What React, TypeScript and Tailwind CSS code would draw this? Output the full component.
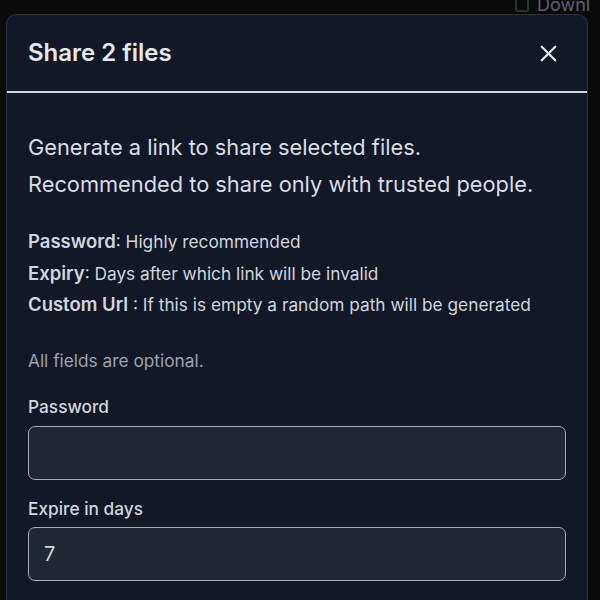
import React from 'react';
import { X } from 'lucide-react';

export default function App() {
  return (
    <div className="w-[600px] h-[600px] overflow-hidden bg-[#0a0a0b] relative font-['Inter',sans-serif]">
      <div className="absolute left-[515px] -top-[9px] flex items-center gap-2 text-[#5b6170] text-[18px] whitespace-nowrap">
        <span className="w-[14px] h-[14px] rounded-[3px] border-2 border-[#1f3a26]" />
        <span>Downl</span>
      </div>
      <div className="pt-[14px] pl-[6px]">
        <div className="w-[582px] h-[620px] rounded-t-[10px] border border-[#2a3140] bg-[#121826] text-[#e5e7eb]">
          <div className="h-[78px] flex items-center justify-between pl-[21px] pr-[25px] border-b-2 border-[#cfd5de]">
            <h2 className="text-[24px] font-semibold text-[#e5e7eb]">Share 2 files</h2>
            <X className="w-[27px] h-[27px] text-[#e5e7eb]" strokeWidth={2} />
          </div>
          <div className="pl-[21px] pr-[21px] pt-[36px]">
            <p className="text-[21.8px] leading-[37px] text-[#d8dce3]">
              Generate a link to share selected files.
              <br />
              Recommended to share only with trusted people.
            </p>
            <div className="mt-[23px] text-[17.3px] leading-[31.5px] text-[#d1d5db]">
              <div>
                <span className="font-semibold text-[18.5px] text-[#d1d5db]">Password</span>: Highly recommended
              </div>
              <div>
                <span className="font-semibold text-[18.5px] text-[#d1d5db]">Expiry</span>: Days after which link will be invalid
              </div>
              <div>
                <span className="font-semibold text-[18.5px] text-[#d1d5db]">Custom Url</span> : If this is empty a random path will be generated
              </div>
            </div>
            <p className="mt-[28px] text-[17.3px] leading-[24px] text-[#9ca3af]">All fields are optional.</p>
            <div className="mt-[22px] flex flex-col">
              <label className="text-[17.3px] font-medium leading-[24px] text-[#d1d5db]">Password</label>
              <input
                type="password"
                className="mt-[7px] w-[538px] h-[54px] rounded-[7px] border-[1.5px] border-[#a3abb8] bg-[#1f2733] px-[15px] text-[20px] text-[#e5e7eb] outline-none"
              />
              <label className="mt-[17px] text-[17.3px] font-medium leading-[24px] text-[#d1d5db]">Expire in days</label>
              <input
                type="text"
                defaultValue="7"
                className="mt-[6px] w-[538px] h-[54px] rounded-[7px] border-[1.5px] border-[#a3abb8] bg-[#1f2733] px-[15px] text-[20px] text-[#d1d5db] outline-none"
              />
            </div>
          </div>
        </div>
      </div>
    </div>
  );
}
